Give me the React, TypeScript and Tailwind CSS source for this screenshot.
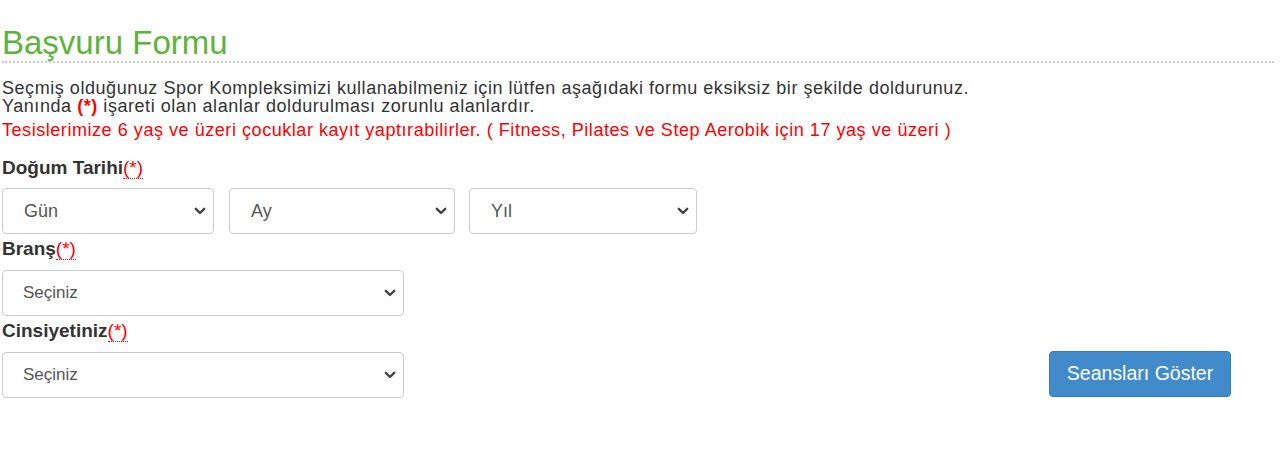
import React from "react";

function Chevron() {
  return (
    <svg width="12" height="8" viewBox="0 0 12 8" className="pointer-events-none absolute right-[8px] top-1/2 -translate-y-1/2">
      <path d="M1.8 1.8 L6 6 L10.2 1.8" fill="none" stroke="#444" strokeWidth="2.4" strokeLinecap="round" strokeLinejoin="round" />
    </svg>
  );
}

function Sel({ label, w, big }: { label: string; w: string; big?: boolean }) {
  return (
    <div className={`relative ${w} h-[46px]`}>
      <select
        className={`w-full h-full appearance-none rounded-[4px] border border-[#cccccc] bg-white text-[#555] outline-none ${big ? "text-[18px] pl-[21px]" : "text-[17px] pl-[20px]"}`}
        style={{ fontFamily: '"Liberation Sans", Arial, sans-serif' }}
        defaultValue=""
      >
        <option value="">{label}</option>
      </select>
      <Chevron />
    </div>
  );
}

function Req() {
  return (
    <abbr className="text-[#ff0000] no-underline border-b border-dotted border-[#ff0000] font-normal" title="Zorunlu">
      (*)
    </abbr>
  );
}

export default function App() {
  return (
    <div className="w-[1280px] h-[467px] bg-white text-[#333] font-['Liberation_Sans',Arial,sans-serif]">
      <div className="pl-[2px] pr-[6px] pt-[25px]">
        <h1 className="text-[33px] leading-[36px] text-[#5db43a] font-normal border-b-2 border-dotted border-[#cccccc]">
          Başvuru Formu
        </h1>
        <div className="mt-[16px] text-[18px] leading-[18px] tracking-[0.55px] text-[#333]">
          <div>Seçmiş olduğunuz Spor Kompleksimizi kullanabilmeniz için lütfen aşağıdaki formu eksiksiz bir şekilde doldurunuz.</div>
          <div>
            Yanında <span className="text-[#ff0000] font-bold">(*)</span> işareti olan alanlar doldurulması zorunlu alanlardır.
          </div>
          <div className="text-[#ff0000] mt-[6px]">
            Tesislerimize 6 yaş ve üzeri çocuklar kayıt yaptırabilirler. ( Fitness, Pilates ve Step Aerobik için 17 yaş ve üzeri )
          </div>
        </div>
        <div className="mt-[19px] text-[19px] leading-[20px] font-bold text-[#333]">
          Doğum Tarihi<Req />
        </div>
        <div className="mt-[10px] flex">
          <Sel label="Gün" w="w-[212px]" big />
          <div className="ml-[15px]"><Sel label="Ay" w="w-[226px]" big /></div>
          <div className="ml-[14px]"><Sel label="Yıl" w="w-[228px]" big /></div>
        </div>
        <div className="mt-[5px] text-[19px] leading-[20px] font-bold text-[#333]">
          Branş<Req />
        </div>
        <div className="mt-[11px]">
          <Sel label="Seçiniz" w="w-[402px]" />
        </div>
        <div className="mt-[5px] text-[19px] leading-[20px] font-bold text-[#333]">
          Cinsiyetiniz<Req />
        </div>
        <div className="mt-[11px] flex items-start">
          <Sel label="Seçiniz" w="w-[402px]" />
          <button className="ml-[645px] -mt-[1px] w-[182px] h-[46px] rounded-[4px] bg-[#428bca] border border-[#357ebd] text-white text-[19.5px]">
            Seansları Göster
          </button>
        </div>
      </div>
    </div>
  );
}
